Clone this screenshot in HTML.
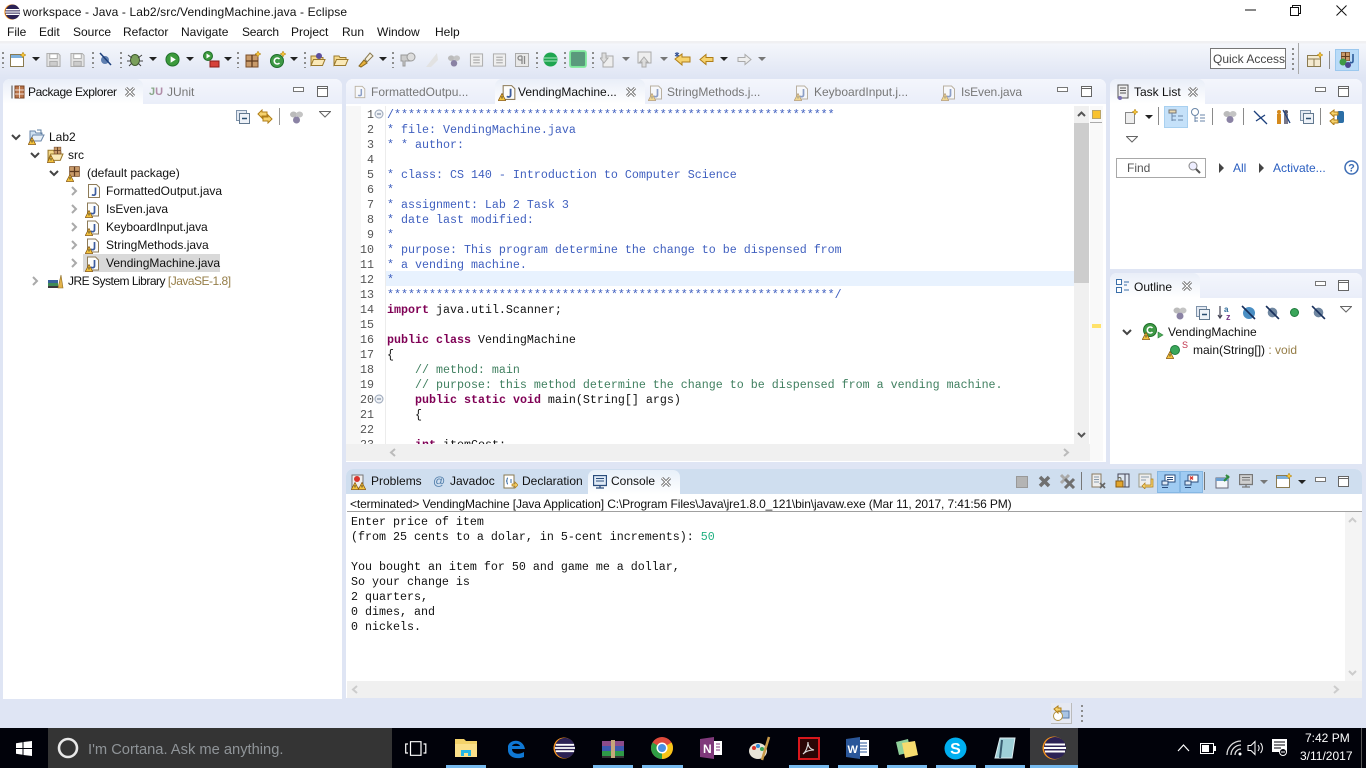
<!DOCTYPE html>
<html><head><meta charset="utf-8"><style>
html,body{margin:0;padding:0}
body{position:relative;width:1366px;height:768px;overflow:hidden;background:#dfe5f4;font-family:"Liberation Sans",sans-serif;font-size:12px;color:#111}
div,svg,span.a{position:absolute}
.t{position:absolute;white-space:nowrap;line-height:16px;height:16px;font-size:12px}
.g{color:#777}
.m{font-size:12px;color:#111}
.c{font-family:"Liberation Mono",monospace;font-size:11.67px;line-height:15px;white-space:pre;position:absolute;margin-top:2px}
.cb{color:#3f5fbf}.cg{color:#3f7f5f}.k{color:#7f0055;font-weight:bold}
.n{position:absolute;width:24px;text-align:right;left:350px;font-family:"Liberation Mono",monospace;font-size:11.67px;line-height:15px;color:#555;margin-top:2px}
.panel{background:#fff;border-radius:7px 7px 0 0}
.tabbar{background:linear-gradient(#f4f6fc,#eaeef9);border-radius:7px 7px 0 0}
.tab{background:linear-gradient(#e9eef8,#fff);border-radius:7px 7px 0 0}
.sep{width:1px;background:#8a8a8a}
.grip{width:2px;background:repeating-linear-gradient(#8c8c8c 0 2px,transparent 2px 5px)}
.ul{height:3px;top:765px;background:#76b9ed}
</style></head><body>
<svg width="0" height="0" style="position:absolute">
<defs>
<symbol id="jf" viewBox="0 0 16 16"><path d="M2.5 1.500h8l3 3v10h-11z" fill="#fdfdfb" stroke="#8d7b58"/><path d="M9.500 4.500v6c0 2-2.500 2-3.500 1" fill="none" stroke="#3c5c9e" stroke-width="1.700"/></symbol>
<symbol id="w" viewBox="0 0 8 8"><path d="M4 .5L7.700 7.500H.3z" fill="#f6c53c" stroke="#8a5a10" stroke-width=".8"/><path d="M4 3v2.500" stroke="#333" stroke-width=".9"/></symbol>
<symbol id="cl" viewBox="0 0 12 12"><path d="M2 2l8 8M10 2l-8 8" stroke="#666" stroke-width="3"/><path d="M2 2l8 8M10 2l-8 8" stroke="#fff" stroke-width="1.200"/></symbol>
<symbol id="min" viewBox="0 0 11 6"><rect x=".5" y=".5" width="10" height="4" fill="#fff" stroke="#777"/></symbol>
<symbol id="max" viewBox="0 0 11 11"><rect x=".5" y=".5" width="10" height="10" fill="#fff" stroke="#666"/><path d="M0 2.500h11" stroke="#666"/></symbol>
<symbol id="dn" viewBox="0 0 8 4"><path d="M0 0h8L4 4z" fill="#222"/></symbol>
<symbol id="dg" viewBox="0 0 8 4"><path d="M0 0h8L4 4z" fill="#777"/></symbol>
<symbol id="cv" viewBox="0 0 10 10"><path d="M1 3l4 4 4-4" fill="none" stroke="#444" stroke-width="2"/></symbol>
<symbol id="cr" viewBox="0 0 10 10"><path d="M3 1l4 4-4 4" fill="none" stroke="#aaa" stroke-width="2"/></symbol>
<symbol id="vm" viewBox="0 0 12 7"><path d="M.5.500h11L6 6z" fill="#fff" stroke="#666"/></symbol>
<symbol id="ec" viewBox="0 0 24 24"><circle cx="12" cy="12" r="11.500" fill="#f7941e"/><circle cx="13" cy="12" r="11" fill="#2c2255"/><path d="M3 8.500h20M2 12h22M3 15.500h20" stroke="#fff" stroke-width="2"/></symbol>
<symbol id="pkg" viewBox="0 0 16 16"><rect x="2" y="2" width="12" height="12" fill="#c89a6a" stroke="#7a4e2a"/><path d="M8 2v12M2 8h12" stroke="#5e3a1e" stroke-width="1.500"/></symbol>
<symbol id="fd" viewBox="0 0 16 16"><path d="M1 13V4h5l1 1.500h6V8H4z" fill="#f5d98b" stroke="#9b7a2e"/><path d="M1 13.500L3.500 7.500H15L12.500 13.500z" fill="#fae9b8" stroke="#9b7a2e"/></symbol>
<symbol id="sv" viewBox="0 0 16 16"><path d="M1 1h12l2 2v12H1z" fill="#e4e4e4" stroke="#aaa"/><rect x="4" y="1.500" width="8" height="5" fill="#fff" stroke="#aaa"/><rect x="4" y="9.500" width="8" height="5" fill="#ccc" stroke="#aaa"/></symbol>
<symbol id="pg" viewBox="0 0 16 16"><rect x="1.500" y="1.500" width="13" height="13" fill="#eee" stroke="#aaa"/><path d="M4.500 5h7M4.500 8h7M4.500 11h7" stroke="#999"/></symbol>
<symbol id="gc" viewBox="0 0 16 16"><circle cx="8" cy="8" r="7" fill="#3c9a3c" stroke="#1f6e2a"/><path d="M6 4.500v7l5.500-3.500z" fill="#fff"/></symbol>
<symbol id="gr" viewBox="0 0 14 14"><ellipse cx="4" cy="4.500" rx="3.500" ry="3" fill="#bbb"/><ellipse cx="10" cy="4.500" rx="3.500" ry="3" fill="#c4c4c4"/><circle cx="7" cy="10" r="3.500" fill="#8a82a4"/></symbol>
<symbol id="col" viewBox="0 0 14 14"><rect x=".5" y=".5" width="10" height="10" fill="#e3e9f2" stroke="#7f93aa"/><rect x="3.500" y="3.500" width="10" height="10" fill="#eef2f8" stroke="#61788f"/><path d="M6 8.500h5" stroke="#294d6f" stroke-width="1.500"/></symbol>
<symbol id="no" viewBox="0 0 14 14"><circle cx="7" cy="7" r="4.500" fill="#6f86a0"/><path d="M1 1l12 12" stroke="#18305c" stroke-width="1.600"/></symbol>
</defs></svg>

<!-- title bar -->
<div style="left:0;top:0;width:1366px;height:42px;background:#fff"></div>
<svg style="left:4px;top:4px" width="16" height="16"><use href="#ec"/></svg>
<div class="t" style="left:23px;top:4px;letter-spacing:.13px;color:#111">workspace - Java - Lab2/src/VendingMachine.java - Eclipse</div>
<svg style="left:1245px;top:9px" width="11" height="2"><path d="M0 1h11" stroke="#111"/></svg>
<svg style="left:1290px;top:5px" width="11" height="11"><path d="M.5 2.500h8v8h-8zM2.500 2.500v-2h8v8h-2" fill="none" stroke="#111"/></svg>
<svg style="left:1336px;top:5px" width="11" height="11"><path d="M.5.500l10 10M10.500.500l-10 10" stroke="#111" stroke-width="1"/></svg>
<div class="t m" style="left:7px;top:24px">File</div>
<div class="t m" style="left:39px;top:24px">Edit</div>
<div class="t m" style="left:73px;top:24px">Source</div>
<div class="t m" style="left:123px;top:24px">Refactor</div>
<div class="t m" style="left:181px;top:24px">Navigate</div>
<div class="t m" style="left:242px;top:24px;letter-spacing:-.2px">Search</div>
<div class="t m" style="left:291px;top:24px">Project</div>
<div class="t m" style="left:342px;top:24px">Run</div>
<div class="t m" style="left:377px;top:24px">Window</div>
<div class="t m" style="left:435px;top:24px">Help</div>

<!-- toolbar -->
<div style="left:0;top:41px;width:1366px;height:37px;background:linear-gradient(#f0f0f2 0,#f0f0f2 2px,#f4f6fb 3px,#dfe5f4 100%)"></div>
<div class="grip" style="left:2px;top:52px;height:16px"></div>
<svg style="left:10px;top:52px" width="16" height="16"><rect x=".5" y="2.500" width="13" height="12" fill="#fff" stroke="#8a7a50"/><rect x="1" y="3" width="12" height="3" fill="#7fb0dc"/><path d="M13 0l1 2 2 1-2 1-1 2-1-2-2-1 2-1z" fill="#f5c33b" stroke="#a97d10" stroke-width=".5"/></svg>
<svg style="left:32px;top:57px" width="8" height="4"><use href="#dn"/></svg>
<svg style="left:46px;top:52px" width="15" height="16"><use href="#sv"/></svg>
<svg style="left:70px;top:52px" width="15" height="16"><use href="#sv"/></svg>
<div class="grip" style="left:92px;top:52px;height:16px"></div>
<svg style="left:98px;top:52px" width="14" height="14"><circle cx="7" cy="8" r="4" fill="#5f7fb0"/><path d="M2 1l11 12" stroke="#1c3f7c" stroke-width="1.500"/></svg>
<div class="grip" style="left:120px;top:52px;height:16px"></div>
<svg style="left:127px;top:51px" width="16" height="17"><ellipse cx="8" cy="9" rx="4.500" ry="5.500" fill="#7ba05c" stroke="#3e5c2b"/><path d="M1 4l4 3M15 4l-4 3M0 10h4M12 10h4M2 15l3-3M14 15l-3-3" stroke="#444"/></svg>
<svg style="left:149px;top:57px" width="8" height="4"><use href="#dn"/></svg>
<svg style="left:165px;top:52px" width="15" height="15"><use href="#gc"/></svg>
<svg style="left:186px;top:57px" width="8" height="4"><use href="#dn"/></svg>
<svg style="left:202px;top:51px" width="18" height="17"><circle cx="6" cy="5" r="4.500" fill="#3c9a3c" stroke="#1f6e2a"/><path d="M4.500 2.500v5l4-2.500z" fill="#fff"/><rect x="8" y="10" width="9" height="6" fill="#d6423a" stroke="#8c1c18"/></svg>
<svg style="left:224px;top:57px" width="8" height="4"><use href="#dn"/></svg>
<div class="grip" style="left:237px;top:52px;height:16px"></div>
<svg style="left:245px;top:51px" width="17" height="17"><rect x="1" y="4" width="12" height="12" fill="#c89a6a" stroke="#7a4e2a"/><path d="M7 4v12M1 10h12" stroke="#5e3a1e" stroke-width="1.300"/><path d="M13 0l1 2 2 1-2 1-1 2-1-2-2-1 2-1z" fill="#f5c33b" stroke="#a97d10" stroke-width=".5"/></svg>
<svg style="left:270px;top:51px" width="16" height="17"><circle cx="7" cy="10" r="6.500" fill="#3f9a46" stroke="#1f6e2a"/><path d="M9.500 8a3 3 0 1 0 0 4" fill="none" stroke="#fff" stroke-width="1.600"/><path d="M13 0l1 2 2 1-2 1-1 2-1-2-2-1 2-1z" fill="#f5c33b" stroke="#a97d10" stroke-width=".5"/></svg>
<svg style="left:290px;top:57px" width="8" height="4"><use href="#dn"/></svg>
<div class="grip" style="left:304px;top:52px;height:16px"></div>
<svg style="left:310px;top:52px" width="16" height="16"><use href="#fd"/><circle cx="9" cy="4" r="3" fill="#5c4e9c"/></svg>
<svg style="left:333px;top:52px" width="16" height="16"><use href="#fd"/></svg>
<svg style="left:357px;top:51px" width="17" height="17"><path d="M2 15l5-6 3 3-6 4z" fill="#e7b13c" stroke="#8a6a20"/><path d="M8 8l5-6 3 3-6 6z" fill="#f5f0e0" stroke="#8a7a50"/></svg>
<svg style="left:379px;top:57px" width="8" height="4"><use href="#dn"/></svg>
<div class="grip" style="left:392px;top:52px;height:16px"></div>
<svg style="left:400px;top:52px" width="16" height="16"><path d="M1 3h9v6H5v5H3V9H1z" fill="#ccc" stroke="#999"/><circle cx="11" cy="5" r="4" fill="#ddd" stroke="#999"/></svg>
<svg style="left:424px;top:52px" width="15" height="16"><path d="M2 15L13 1l1 7-7 7z" fill="#e2e2e2"/></svg>
<svg style="left:447px;top:54px" width="14" height="13"><use href="#gr"/></svg>
<svg style="left:469px;top:52px" width="15" height="16"><use href="#pg"/></svg>
<svg style="left:492px;top:52px" width="15" height="16"><use href="#pg"/></svg>
<svg style="left:515px;top:52px" width="15" height="16"><rect x=".5" y="1.500" width="13" height="13" fill="#e8e8e8" stroke="#aaa"/><path d="M7 4H5a2 2 0 0 0 0 4h2M7 4v8M9.500 4v8" stroke="#888" fill="none" stroke-width="1.300"/></svg>
<div class="grip" style="left:536px;top:52px;height:16px"></div>
<svg style="left:543px;top:52px" width="15" height="15"><circle cx="7.500" cy="7.500" r="7" fill="#1fa550"/><path d="M1 6h13M1 9h13" stroke="#a8e8c0"/></svg>
<div class="grip" style="left:564px;top:52px;height:16px"></div>
<div style="left:570px;top:51px;width:14px;height:14px;background:#5a9a7c;border:1px solid #7be89a;border-radius:2px;box-shadow:0 0 0 1px #8fe8a8"></div>
<div class="grip" style="left:592px;top:52px;height:16px"></div>
<svg style="left:600px;top:52px" width="14" height="16"><rect x="3" y="4" width="10" height="11" fill="#eee" stroke="#aaa"/><path d="M2 1h4v5h2l-4 5-4-5h2z" fill="#ddd" stroke="#aaa"/></svg>
<svg style="left:622px;top:57px" width="8" height="4"><use href="#dg"/></svg>
<svg style="left:637px;top:51px" width="15" height="17"><rect x="1" y="1" width="13" height="11" fill="#eee" stroke="#aaa"/><path d="M7 6l4 5H9v5H5v-5H3z" fill="#ddd" stroke="#aaa"/></svg>
<svg style="left:660px;top:57px" width="8" height="4"><use href="#dg"/></svg>
<svg style="left:674px;top:52px" width="17" height="14"><path d="M1 7l7-5v3h8v5H8v3z" fill="#f6d36e" stroke="#b07e18"/><path d="M3 0v5M1 1l4 3M5 1L1 4" stroke="#2a4a90"/></svg>
<svg style="left:699px;top:53px" width="15" height="13"><path d="M1 6.500l6-5v3h7v4H7v3z" fill="#f6d36e" stroke="#b07e18"/></svg>
<svg style="left:720px;top:57px" width="8" height="4"><use href="#dn"/></svg>
<svg style="left:737px;top:53px" width="15" height="13"><path d="M14 6.500l-6-5v3H1v4h7v3z" fill="#eee" stroke="#aaa"/></svg>
<svg style="left:758px;top:57px" width="8" height="4"><use href="#dg"/></svg>

<div style="left:1210px;top:48px;width:74px;height:19px;background:#fff;border:1px solid #777"></div>
<div class="t" style="left:1213px;top:51px;color:#444">Quick Access</div>
<div class="grip" style="left:1292px;top:48px;height:22px"></div>
<div class="sep" style="left:1298px;top:43px;height:31px;background:#a9a9a9"></div>
<svg style="left:1307px;top:52px" width="16" height="16"><rect x=".5" y="3.500" width="13" height="11" fill="#f4ead0" stroke="#8a7a50"/><path d="M.5 7h13M7 7v7" stroke="#8a7a50"/><path d="M13 0l1 2 2 1-2 1-1 2-1-2-2-1 2-1z" fill="#f5c33b" stroke="#a97d10" stroke-width=".5"/></svg>
<div class="sep" style="left:1329px;top:51px;height:18px"></div>
<div style="left:1335px;top:49px;width:22px;height:20px;background:#b9dbf8;border:1px solid #9cc8ee"></div>
<svg style="left:1339px;top:51px" width="17" height="17"><use href="#pkg" width="11" height="11" x="1"/><circle cx="4" cy="11" r="3.500" fill="#3f9a46"/><circle cx="9" cy="14" r="3" fill="#4c4690"/><path d="M14 3v7c0 2-2 2-3 1" fill="none" stroke="#2c5a9a" stroke-width="1.600"/></svg>

<!-- Package Explorer -->
<div class="panel" style="left:3px;top:79px;width:339px;height:620px"></div>
<div class="tabbar" style="left:3px;top:79px;width:339px;height:25px"></div>
<div class="tab" style="left:3px;top:79px;width:140px;height:25px"></div>
<svg style="left:11px;top:85px" width="14" height="14"><path d="M1 .5v13" stroke="#444"/><rect x="4" y="1" width="9" height="12" fill="#b9744a" stroke="#7a4526"/><path d="M4 5h9M4 9h9M8.500 1v12" stroke="#fff" stroke-width=".7"/></svg>
<div class="t" style="left:28px;top:84px;letter-spacing:-.38px">Package Explorer</div>
<svg style="left:124px;top:86px" width="12" height="12"><use href="#cl"/></svg>
<div class="t" style="left:149px;top:84px;color:#8aa88a;font-weight:bold;font-size:11px">J<span style="color:#b08ca8">U</span></div>
<div class="t g" style="left:167px;top:84px">JUnit</div>
<svg style="left:293px;top:87px" width="11" height="6"><use href="#min"/></svg>
<svg style="left:317px;top:86px" width="11" height="11"><use href="#max"/></svg>
<svg style="left:236px;top:110px" width="14" height="14"><use href="#col"/></svg>
<svg style="left:257px;top:109px" width="16" height="15"><path d="M1 5l4-4v2h5v4H5v2z" fill="#f6d36e" stroke="#b07e18"/><path d="M15 10l-4-4v2H6v4h5v2z" fill="#f6d36e" stroke="#b07e18"/></svg>
<div class="sep" style="left:279px;top:108px;height:17px;background:#999"></div>
<svg style="left:289px;top:110px" width="15" height="14"><use href="#gr"/></svg>
<svg style="left:319px;top:111px" width="12" height="7"><use href="#vm"/></svg>

<!-- tree -->
<svg style="left:11px;top:132px" width="10" height="10"><use href="#cv"/></svg>
<svg style="left:28px;top:128px" width="17" height="17"><path d="M2 12V3h5l1 2h6v3H5z" fill="#cfe0f0" stroke="#6a86a8"/><path d="M2 13l3-6h11l-3 6z" fill="#e8f0f8" stroke="#6a86a8"/><path d="M9 2l4 0 0 4" fill="none" stroke="#5a7ca0"/><use href="#w" x="0" y="9" width="8" height="8"/></svg>
<div class="t" style="left:49px;top:129px">Lab2</div>
<svg style="left:30px;top:150px" width="10" height="10"><use href="#cv"/></svg>
<svg style="left:47px;top:146px" width="17" height="17"><use href="#fd"/><use href="#pkg" x="6" y="0" width="9" height="9"/><use href="#w" x="0" y="9" width="8" height="8"/></svg>
<div class="t" style="left:68px;top:147px">src</div>
<svg style="left:49px;top:168px" width="10" height="10"><use href="#cv"/></svg>
<svg style="left:66px;top:165px" width="15" height="17"><use href="#pkg" x="2" y="0" width="13" height="13"/><use href="#w" x="0" y="9" width="8" height="8"/></svg>
<div class="t" style="left:87px;top:165px">(default package)</div>

<div style="left:83px;top:254px;width:137px;height:18px;background:#d9d9d9"></div>
<svg style="left:69px;top:186px" width="10" height="10"><use href="#cr"/></svg>
<svg style="left:69px;top:204px" width="10" height="10"><use href="#cr"/></svg>
<svg style="left:69px;top:222px" width="10" height="10"><use href="#cr"/></svg>
<svg style="left:69px;top:240px" width="10" height="10"><use href="#cr"/></svg>
<svg style="left:69px;top:258px" width="10" height="10"><use href="#cr"/></svg>
<svg style="left:86px;top:183px" width="16" height="16"><use href="#jf"/></svg>
<svg style="left:85px;top:201px" width="16" height="17"><use href="#jf"/><use href="#w" x="0" y="9" width="8" height="8"/></svg>
<svg style="left:85px;top:219px" width="16" height="17"><use href="#jf"/><use href="#w" x="0" y="9" width="8" height="8"/></svg>
<svg style="left:85px;top:237px" width="16" height="17"><use href="#jf"/><use href="#w" x="0" y="9" width="8" height="8"/></svg>
<svg style="left:85px;top:255px" width="16" height="17"><use href="#jf"/><use href="#w" x="0" y="9" width="8" height="8"/></svg>
<div class="t" style="left:106px;top:183px">FormattedOutput.java</div>
<div class="t" style="left:106px;top:201px">IsEven.java</div>
<div class="t" style="left:106px;top:219px;letter-spacing:-.1px">KeyboardInput.java</div>
<div class="t" style="left:106px;top:237px">StringMethods.java</div>
<div class="t" style="left:106px;top:255px">VendingMachine.java</div>
<svg style="left:30px;top:276px" width="10" height="10"><use href="#cr"/></svg>
<svg style="left:48px;top:274px" width="16" height="15"><rect x="0" y="9" width="10" height="3" fill="#3f8a55"/><rect x="0" y="6" width="10" height="3" fill="#38629c"/><rect x="0" y="12" width="10" height="2" fill="#3a3a3a"/><path d="M10 14L13 1l2 13z" fill="#e2b24a" stroke="#8c6a20" stroke-width=".6"/></svg>
<div class="t" style="left:68px;top:273px;letter-spacing:-.5px">JRE System Library <span style="color:#957d47">[JavaSE-1.8]</span></div>

<!-- Editor -->
<div class="panel" style="left:346px;top:79px;width:760px;height:383px"></div>
<div class="tabbar" style="left:346px;top:79px;width:760px;height:25px"></div>
<div class="tab" style="left:495px;top:79px;width:150px;height:25px"></div>
<svg style="left:353px;top:84px" width="14" height="16" opacity=".55"><use href="#jf" width="14" height="16"/></svg>
<div class="t g" style="left:371px;top:84px">FormattedOutpu...</div>
<svg style="left:498px;top:84px" width="18" height="17"><use href="#jf" x="2"/><use href="#w" x="0" y="9" width="8" height="8"/></svg>
<div class="t" style="left:518px;top:84px">VendingMachine...</div>
<svg style="left:625px;top:86px" width="12" height="12"><use href="#cl"/></svg>
<svg style="left:648px;top:84px" width="16" height="17" opacity=".55"><use href="#jf"/><use href="#w" x="0" y="9" width="8" height="8"/></svg>
<div class="t g" style="left:667px;top:84px">StringMethods.j...</div>
<svg style="left:794px;top:84px" width="16" height="17" opacity=".55"><use href="#jf"/><use href="#w" x="0" y="9" width="8" height="8"/></svg>
<div class="t g" style="left:814px;top:84px">KeyboardInput.j...</div>
<svg style="left:941px;top:84px" width="16" height="17" opacity=".55"><use href="#jf"/><use href="#w" x="0" y="9" width="8" height="8"/></svg>
<div class="t g" style="left:961px;top:84px;letter-spacing:-.1px">IsEven.java</div>
<svg style="left:1057px;top:87px" width="11" height="6"><use href="#min"/></svg>
<svg style="left:1081px;top:86px" width="11" height="11"><use href="#max"/></svg>

<div style="left:346px;top:106px;width:15px;height:338px;background:#f7f7f7"></div>
<div style="left:385px;top:106px;width:1px;height:338px;background:#ececec"></div>
<div style="left:386px;top:271px;width:688px;height:15px;background:#e8f2fe"></div>
<div style="left:346px;top:106px;width:728px;height:338px;overflow:hidden">
<div style="position:absolute;left:-346px;top:-106px;width:1100px;height:600px">
<div class="n" style="top:106px">1</div><div class="n" style="top:121px">2</div><div class="n" style="top:136px">3</div><div class="n" style="top:151px">4</div><div class="n" style="top:166px">5</div><div class="n" style="top:181px">6</div><div class="n" style="top:196px">7</div><div class="n" style="top:211px">8</div><div class="n" style="top:226px">9</div><div class="n" style="top:241px">10</div><div class="n" style="top:256px">11</div><div class="n" style="top:271px">12</div><div class="n" style="top:286px">13</div><div class="n" style="top:301px">14</div><div class="n" style="top:316px">15</div><div class="n" style="top:331px">16</div><div class="n" style="top:346px">17</div><div class="n" style="top:361px">18</div><div class="n" style="top:376px">19</div><div class="n" style="top:391px">20</div><div class="n" style="top:406px">21</div><div class="n" style="top:421px">22</div><div class="n" style="top:436px">23</div>
<div class="c cb" style="left:387px;top:106px">/***************************************************************</div>
<div class="c cb" style="left:387px;top:121px">* file: VendingMachine.java</div>
<div class="c cb" style="left:387px;top:136px">* * author:</div>
<div class="c cb" style="left:387px;top:166px">* class: CS 140 - Introduction to Computer Science</div>
<div class="c cb" style="left:387px;top:181px">*</div>
<div class="c cb" style="left:387px;top:196px">* assignment: Lab 2 Task 3</div>
<div class="c cb" style="left:387px;top:211px">* date last modified:</div>
<div class="c cb" style="left:387px;top:226px">*</div>
<div class="c cb" style="left:387px;top:241px">* purpose: This program determine the change to be dispensed from</div>
<div class="c cb" style="left:387px;top:256px">* a vending machine.</div>
<div class="c cb" style="left:387px;top:271px">*</div>
<div class="c cb" style="left:387px;top:286px">****************************************************************/</div>
<div class="c" style="left:387px;top:301px"><span class="k">import</span> java.util.Scanner;</div>
<div class="c" style="left:387px;top:331px"><span class="k">public</span> <span class="k">class</span> VendingMachine</div>
<div class="c" style="left:387px;top:346px">{</div>
<div class="c cg" style="left:387px;top:361px">    // method: main</div>
<div class="c cg" style="left:387px;top:376px">    // purpose: this method determine the change to be dispensed from a vending machine.</div>
<div class="c" style="left:387px;top:391px">    <span class="k">public</span> <span class="k">static</span> <span class="k">void</span> main(String[] args)</div>
<div class="c" style="left:387px;top:406px">    {</div>
<div class="c" style="left:387px;top:436px">    <span class="k">int</span> itemCost;</div>
</div></div>
<svg style="left:374px;top:109px" width="10" height="10"><circle cx="5" cy="5" r="4" fill="#eef1f6" stroke="#9aa6b8"/><path d="M3 5h4" stroke="#66768c"/></svg>
<svg style="left:374px;top:394px" width="10" height="10"><circle cx="5" cy="5" r="4" fill="#eef1f6" stroke="#9aa6b8"/><path d="M3 5h4" stroke="#66768c"/></svg>
<div style="left:1074px;top:106px;width:15px;height:338px;background:#f0f0f0"></div>
<div style="left:1074px;top:123px;width:15px;height:160px;background:#cdcdcd"></div>
<svg style="left:1077px;top:110px" width="9" height="8"><path d="M1 6l3.500-3.500L8 6" fill="none" stroke="#555" stroke-width="2"/></svg>
<svg style="left:1077px;top:431px" width="9" height="8"><path d="M1 2l3.500 3.500L8 2" fill="none" stroke="#555" stroke-width="2"/></svg>
<div style="left:1090px;top:106px;width:13px;height:355px;background:#f9f9f9"></div>
<div style="left:1092px;top:110px;width:7px;height:7px;background:#f9c22e;border:1px solid #b9a468"></div>
<div style="left:1090px;top:122px;width:12px;height:1px;background:#aaa"></div>
<div style="left:1092px;top:324px;width:9px;height:4px;background:#ffe26a"></div>
<div style="left:346px;top:444px;width:744px;height:17px;background:#f0f0f0"></div>
<svg style="left:389px;top:448px" width="8" height="9"><path d="M6 1L2 4.500 6 8" fill="none" stroke="#bbb" stroke-width="2"/></svg>
<svg style="left:1062px;top:448px" width="8" height="9"><path d="M2 1l4 3.500L2 8" fill="none" stroke="#bbb" stroke-width="2"/></svg>

<!-- Task list -->
<div class="panel" style="left:1110px;top:79px;width:252px;height:190px"></div>
<div class="tabbar" style="left:1110px;top:79px;width:252px;height:25px"></div>
<div class="tab" style="left:1110px;top:79px;width:95px;height:25px"></div>
<svg style="left:1117px;top:84px" width="13" height="16"><rect x="1" y="1" width="10" height="13" fill="#eee" stroke="#555"/><path d="M3 4h6M3 6.500h6M3 9h6" stroke="#555"/><circle cx="3" cy="14" r="2" fill="#7a70b0"/></svg>
<div class="t" style="left:1134px;top:84px">Task List</div>
<svg style="left:1187px;top:86px" width="12" height="12"><use href="#cl"/></svg>
<svg style="left:1315px;top:87px" width="11" height="6"><use href="#min"/></svg>
<svg style="left:1338px;top:86px" width="11" height="11"><use href="#max"/></svg>
<svg style="left:1124px;top:108px" width="15" height="16"><path d="M1.500 4.500h9v11h-9z" fill="#eee" stroke="#888"/><path d="M11 1l1 2 2 1-2 1-1 2-1-2-2-1 2-1z" fill="#f5c33b" stroke="#a97d10" stroke-width=".5"/></svg>
<svg style="left:1145px;top:115px" width="8" height="4"><use href="#dn"/></svg>
<div class="sep" style="left:1158px;top:107px;height:18px"></div>
<div style="left:1164px;top:106px;width:22px;height:20px;background:#c5e1f9;border:1px solid #a8d0f0"></div>
<svg style="left:1168px;top:108px" width="16" height="16"><path d="M1 2h7v3H1z" fill="#e8d8b0" stroke="#777"/><path d="M4 5v8M4 8h4M4 12h4M10 8h5M10 12h5" stroke="#6a86a8"/></svg>
<svg style="left:1191px;top:108px" width="15" height="16"><circle cx="4" cy="4" r="3.500" fill="#fff" stroke="#6a86a8"/><path d="M4 8v6M4 10h3M4 13h3M9 7h5M9 10h5M9 13h5" stroke="#6a86a8"/></svg>
<div class="sep" style="left:1212px;top:108px;height:17px"></div>
<svg style="left:1223px;top:109px" width="14" height="15"><use href="#gr"/></svg>
<div class="sep" style="left:1243px;top:108px;height:17px"></div>
<svg style="left:1253px;top:110px" width="15" height="15"><path d="M1 1l13 13M3 11l9-6" stroke="#1c3f7c" stroke-width="1.300"/></svg>
<svg style="left:1275px;top:109px" width="16" height="16"><circle cx="4" cy="3" r="2" fill="#d58a1c"/><rect x="2" y="5" width="4" height="10" fill="#d58a1c"/><circle cx="11" cy="3" r="2" fill="#556"/><rect x="9" y="5" width="4" height="10" fill="#778"/><path d="M8 1l7 13" stroke="#1c3f7c" stroke-width="1.300"/></svg>
<svg style="left:1300px;top:110px" width="14" height="14"><use href="#col"/></svg>
<div class="sep" style="left:1320px;top:108px;height:17px"></div>
<svg style="left:1329px;top:109px" width="16" height="16"><rect x="8" y="2" width="7" height="12" rx="2" fill="#2b6ea6"/><path d="M1 4l4-3v2h4v3H5v2zM1 12l4-3v2h4v3H5v2z" fill="#f6d36e" stroke="#b07e18"/></svg>
<svg style="left:1126px;top:136px" width="12" height="7"><use href="#vm"/></svg>
<div style="left:1116px;top:158px;width:88px;height:18px;background:#fff;border:1px solid #a8a8a8"></div>
<div class="t" style="left:1127px;top:160px;color:#555">Find</div>
<svg style="left:1188px;top:161px" width="13" height="13"><circle cx="5" cy="5" r="4" fill="#eef" stroke="#888"/><path d="M8 8l4 4" stroke="#555" stroke-width="2"/></svg>
<svg style="left:1219px;top:163px" width="5" height="10"><path d="M0 0l5 5-5 5z" fill="#444"/></svg>
<div class="t" style="left:1233px;top:160px;color:#2a5ec0">All</div>
<svg style="left:1259px;top:163px" width="5" height="10"><path d="M0 0l5 5-5 5z" fill="#444"/></svg>
<div class="t" style="left:1273px;top:160px;color:#2a5ec0">Activate...</div>
<svg style="left:1344px;top:160px" width="15" height="15"><circle cx="7.500" cy="7.500" r="6.500" fill="#fff" stroke="#3d6db5" stroke-width="1.500"/><text x="7.500" y="11.500" font-family="Liberation Sans" font-size="11" font-weight="bold" text-anchor="middle" fill="#3d6db5">?</text></svg>

<!-- Outline -->
<div class="panel" style="left:1110px;top:273px;width:252px;height:191px"></div>
<div class="tabbar" style="left:1110px;top:273px;width:252px;height:25px"></div>
<div class="tab" style="left:1110px;top:273px;width:90px;height:25px"></div>
<svg style="left:1116px;top:279px" width="14" height="14"><path d="M.5.500h5v5h-5zM.5 8.500h5v5h-5z" fill="#fff" stroke="#3a6ea8"/><path d="M8 3h5M8 6h3M8 11h5" stroke="#3a6ea8"/></svg>
<div class="t" style="left:1134px;top:279px">Outline</div>
<svg style="left:1181px;top:280px" width="12" height="12"><use href="#cl"/></svg>
<svg style="left:1315px;top:281px" width="11" height="6"><use href="#min"/></svg>
<svg style="left:1338px;top:280px" width="11" height="11"><use href="#max"/></svg>
<svg style="left:1173px;top:306px" width="14" height="14"><use href="#gr"/></svg>
<svg style="left:1196px;top:306px" width="14" height="14"><use href="#col"/></svg>
<svg style="left:1217px;top:304px" width="17" height="17"><path d="M3 2v12M1 11l2 3 2-3" fill="none" stroke="#445" stroke-width="1.200"/><text x="7" y="8" font-family="Liberation Sans" font-size="8" font-weight="bold" fill="#2d6a9a">a</text><text x="9" y="16" font-family="Liberation Sans" font-size="9" font-weight="bold" fill="#7a3a8a">z</text></svg>
<svg style="left:1241px;top:305px" width="15" height="15"><circle cx="8" cy="8" r="6" fill="#4a8fc4"/><path d="M1 1l13 13" stroke="#18305c" stroke-width="1.600"/></svg>
<svg style="left:1265px;top:305px" width="15" height="15"><use href="#no"/></svg>
<svg style="left:1290px;top:308px" width="9" height="9"><circle cx="4.500" cy="4.500" r="4" fill="#3aa65a" stroke="#1f7a3c"/></svg>
<svg style="left:1311px;top:305px" width="15" height="15"><use href="#no"/></svg>
<svg style="left:1340px;top:306px" width="12" height="7"><use href="#vm"/></svg>
<svg style="left:1122px;top:327px" width="10" height="10"><use href="#cv"/></svg>
<svg style="left:1142px;top:323px" width="17" height="17"><circle cx="8" cy="7" r="6.500" fill="#3f9a46" stroke="#1f6e2a"/><path d="M10.500 5a3 3 0 1 0 0 4" fill="none" stroke="#fff" stroke-width="1.600"/><use href="#w" x="0" y="9" width="8" height="8"/></svg>
<svg style="left:1157px;top:331px" width="7" height="8"><path d="M1 1l5 3-5 3z" fill="#4fae5a" stroke="#2c7e3a" stroke-width=".6"/></svg>
<div class="t" style="left:1168px;top:324px">VendingMachine</div>
<svg style="left:1166px;top:344px" width="14" height="15"><circle cx="9" cy="6" r="4.500" fill="#3aa65a" stroke="#1f7a3c"/><use href="#w" x="0" y="7" width="8" height="8"/></svg>
<div class="t" style="left:1182px;top:337px;color:#c0304a;font-size:9px">S</div>
<div class="t" style="left:1193px;top:342px">main(String[]) <span style="color:#957d47">: void</span></div>

<!-- Console -->
<div class="panel" style="left:346px;top:469px;width:1016px;height:229px"></div>
<div style="left:346px;top:469px;width:1016px;height:25px;background:#cfdeef;border-radius:7px 7px 0 0"></div>
<div style="left:588px;top:470px;width:92px;height:25px;background:linear-gradient(#e8f0f9,#fff);border-radius:7px 7px 0 0"></div>
<svg style="left:351px;top:474px" width="15" height="16"><rect x="1" y="1" width="11" height="13" fill="#eee" stroke="#777"/><circle cx="6" cy="5" r="3" fill="#d8342c"/><use href="#w" x="0" y="8" width="8" height="8"/><use href="#w" x="7" y="8" width="8" height="8"/></svg>
<div class="t" style="left:371px;top:473px">Problems</div>
<div class="t" style="left:433px;top:473px;color:#4c7aa8">@</div>
<div class="t" style="left:450px;top:473px">Javadoc</div>
<svg style="left:503px;top:474px" width="15" height="16"><rect x="1" y="1" width="10" height="13" fill="#fff" stroke="#8a7a50"/><path d="M5 4c-1 0-1 1-1 2s-1 1-1 1 1 0 1 1 0 2 1 2M7 6h2M7 8h2" fill="none" stroke="#3a6ea8"/><path d="M9 10h3V8l3 3-3 3v-2H9z" fill="#f6d36e" stroke="#b07e18" stroke-width=".7"/></svg>
<div class="t" style="left:522px;top:473px">Declaration</div>
<svg style="left:593px;top:475px" width="14" height="14"><rect x=".5" y=".5" width="13" height="10" fill="#dfeaf6" stroke="#2b4d7c" stroke-width="1.300"/><path d="M3 3.500h8M3 6h8" stroke="#2b4d7c"/><path d="M3 13h8M7 10v3" stroke="#2b4d7c" stroke-width="1.300"/></svg>
<div class="t" style="left:611px;top:473px">Console</div>
<svg style="left:660px;top:476px" width="12" height="12"><use href="#cl"/></svg>

<div style="left:1016px;top:476px;width:10px;height:10px;background:#b4b4b4;border:1px solid #999"></div>
<svg style="left:1038px;top:475px" width="13" height="13"><path d="M2 2l9 9M11 2l-9 9" stroke="#707070" stroke-width="3.500"/></svg>
<svg style="left:1059px;top:473px" width="17" height="16"><path d="M2 2l8 8M10 2l-8 8" stroke="#aaa" stroke-width="3"/><path d="M6 6l9 9M15 6l-9 9" stroke="#707070" stroke-width="3"/></svg>
<div class="sep" style="left:1081px;top:472px;height:18px;background:#777"></div>
<svg style="left:1091px;top:473px" width="15" height="16"><rect x="1" y="1" width="9" height="13" fill="#eee" stroke="#8a7a60"/><path d="M3 4h5M3 6.500h5M3 9h5" stroke="#89a"/><path d="M9 10l5 5M14 10l-5 5" stroke="#666" stroke-width="1.700"/></svg>
<svg style="left:1115px;top:473px" width="15" height="16"><rect x="3" y="1" width="11" height="13" fill="#dde6f2" stroke="#445"/><path d="M10 1v13" stroke="#445"/><rect x="1" y="8" width="7" height="6" fill="#e2a52c" stroke="#8a5a10"/><path d="M3 8V6a1.500 1.500 0 0 1 3 0v2" fill="none" stroke="#665"/></svg>
<svg style="left:1138px;top:473px" width="16" height="16"><rect x="1" y="1" width="12" height="13" fill="#eee" stroke="#998"/><path d="M3 4h8M3 7h5" stroke="#89a"/><path d="M13 6v6H7V10l-3 3 3 3v-2h8V6z" fill="#f6d36e" stroke="#b07e18" stroke-width=".7"/></svg>
<div style="left:1157px;top:471px;width:21px;height:20px;background:#9fcbf2;border:1px solid #86b8e4"></div>
<div style="left:1180px;top:471px;width:21px;height:20px;background:#9fcbf2;border:1px solid #86b8e4"></div>
<svg style="left:1161px;top:474px" width="15" height="15"><rect x="4" y="1" width="10" height="7" fill="#fff" stroke="#2b4d7c"/><path d="M6 3.500h6M6 5.500h6" stroke="#2b4d7c"/><rect x="1" y="7" width="6" height="4" fill="#dfeaf6" stroke="#2b4d7c"/><path d="M1 13.500h6" stroke="#2b4d7c"/></svg>
<svg style="left:1184px;top:474px" width="15" height="15"><rect x="4" y="1" width="10" height="7" fill="#fff" stroke="#2b4d7c"/><path d="M6 2.500l3 3M9 2.500l-3 3" stroke="#d8342c" stroke-width="1.300"/><rect x="1" y="7" width="6" height="4" fill="#dfeaf6" stroke="#2b4d7c"/><path d="M1 13.500h6" stroke="#2b4d7c"/></svg>
<div class="sep" style="left:1204px;top:472px;height:18px;background:#777"></div>
<svg style="left:1215px;top:474px" width="16" height="16"><rect x="1" y="4" width="12" height="10" fill="#f4f6fa" stroke="#667"/><rect x="1" y="4" width="12" height="3" fill="#6a9ed0"/><path d="M9 7l5-5M11 1l3 3" stroke="#2f8a3c" stroke-width="2"/></svg>
<svg style="left:1239px;top:474px" width="14" height="14"><rect x=".5" y=".5" width="13" height="10" fill="#cfcfcf" stroke="#777" stroke-width="1.300"/><path d="M3 3.500h8M3 6h8" stroke="#777"/><path d="M3 13h8M7 10v3" stroke="#777" stroke-width="1.300"/></svg>
<svg style="left:1260px;top:480px" width="8" height="4"><use href="#dg"/></svg>
<svg style="left:1276px;top:473px" width="16" height="16"><rect x=".5" y="2.500" width="13" height="12" fill="#fff" stroke="#8a7a50"/><rect x="1" y="3" width="12" height="3" fill="#7fb0dc"/><path d="M13 0l1 2 2 1-2 1-1 2-1-2-2-1 2-1z" fill="#f5c33b" stroke="#a97d10" stroke-width=".5"/></svg>
<svg style="left:1298px;top:480px" width="8" height="4"><use href="#dn"/></svg>
<svg style="left:1315px;top:477px" width="11" height="6"><use href="#min"/></svg>
<svg style="left:1338px;top:476px" width="11" height="11"><use href="#max"/></svg>

<div class="t" style="left:350px;top:496px;letter-spacing:-.12px">&lt;terminated&gt; VendingMachine [Java Application] C:\Program Files\Java\jre1.8.0_121\bin\javaw.exe (Mar 11, 2017, 7:41:56 PM)</div>
<div style="left:347px;top:511px;width:1015px;height:1px;background:#a0a0a0"></div>
<div class="c" style="left:351px;top:513px">Enter price of item</div>
<div class="c" style="left:351px;top:528px">(from 25 cents to a dolar, in 5-cent increments): <span style="color:#1fb080">50</span></div>
<div class="c" style="left:351px;top:558px">You bought an item for 50 and game me a dollar,</div>
<div class="c" style="left:351px;top:573px">So your change is</div>
<div class="c" style="left:351px;top:588px">2 quarters,</div>
<div class="c" style="left:351px;top:603px">0 dimes, and</div>
<div class="c" style="left:351px;top:618px">0 nickels.</div>
<div style="left:1345px;top:512px;width:17px;height:186px;background:#f4f4f4"></div>
<div style="left:347px;top:681px;width:1015px;height:17px;background:#f0f0f0"></div>
<svg style="left:1348px;top:516px" width="9" height="8"><path d="M1 6l3.500-3.500L8 6" fill="none" stroke="#ccc" stroke-width="2"/></svg>
<svg style="left:1348px;top:669px" width="9" height="8"><path d="M1 2l3.500 3.500L8 2" fill="none" stroke="#ccc" stroke-width="2"/></svg>
<svg style="left:351px;top:685px" width="8" height="9"><path d="M6 1L2 4.500 6 8" fill="none" stroke="#ccc" stroke-width="2"/></svg>
<svg style="left:1332px;top:685px" width="8" height="9"><path d="M2 1l4 3.500L2 8" fill="none" stroke="#ccc" stroke-width="2"/></svg>

<!-- status -->
<div style="left:1051px;top:703px;width:20px;height:20px;background:#e6e9f2;border-right:1px solid #bbb;border-bottom:1px solid #bbb"></div>
<svg style="left:1053px;top:705px" width="17" height="17"><rect x="8" y="6" width="8" height="7" fill="#a9c4e4" stroke="#5a7ca8"/><circle cx="5" cy="11" r="4.500" fill="#fff" stroke="#b09040"/><path d="M1 4l4-3v2h3v3H5v2z" fill="#f6d36e" stroke="#b07e18"/></svg>
<div class="grip" style="left:1081px;top:705px;height:18px"></div>

<!-- taskbar -->
<div style="left:0;top:728px;width:1366px;height:40px;background:#01020a"></div>
<svg style="left:16px;top:741px" width="16" height="15"><path d="M0 2.200L6.500 1.200V7H0zM7.500 1L16 0V7H7.500zM0 8H6.500V13.800L0 12.800zM7.500 8H16V15L7.500 14z" fill="#fff"/></svg>
<div style="left:48px;top:728px;width:344px;height:40px;background:#343434"></div>
<svg style="left:57px;top:737px" width="22" height="22"><circle cx="11" cy="11" r="9" fill="none" stroke="#e8e8e8" stroke-width="2.600"/></svg>
<div class="t" style="left:88px;top:742px;font-size:14.700px;color:#8f9498">I'm Cortana. Ask me anything.</div>
<svg style="left:405px;top:741px" width="22" height="15"><path d="M5.500.700h10.500v13.600H5.500zM3 3H.7v9H3M18.500 3h2.300v9h-2.300" fill="none" stroke="#fff" stroke-width="1.200"/></svg>
<svg style="left:455px;top:738px" width="22" height="20"><path d="M0 1h9l2 2h11v16H0z" fill="#f3d26a"/><path d="M0 6h22v13H0z" fill="#fbe08a"/><path d="M6 18v-6h10v6h-3v-3H9v3z" fill="#26b6e4"/></svg>
<svg style="left:505px;top:737px" width="21" height="22"><path d="M3 9C5 2 18 1 20 12H7c0 5 7 6 12 3v5c-8 3-16 0-16-7 0-1 0-3 0-4z" fill="#0f78d4"/><path d="M7 9c1-3 7-3 8 0z" fill="#01020a"/></svg>
<svg style="left:552px;top:737px" width="24" height="22"><use href="#ec"/></svg>
<svg style="left:601px;top:739px" width="24" height="20"><rect x="1" y="2" width="22" height="5" fill="#8c4b8a"/><rect x="1" y="7" width="22" height="5" fill="#3d58b0"/><rect x="1" y="12" width="22" height="5" fill="#2e9a48"/><rect x="1" y="17" width="22" height="2" fill="#333"/><rect x="10" y="1" width="4" height="18" fill="#c6a77a"/></svg>
<svg style="left:651px;top:737px" width="22" height="22"><circle cx="11" cy="11" r="11" fill="#de4a3c"/><path d="M11 11L1.500 5.500A11 11 0 0 0 11 22z" fill="#2f9e44"/><path d="M11 11L20.500 5.500A11 11 0 0 1 11 22z" fill="#f7c518"/><circle cx="11" cy="11" r="5.500" fill="#fff"/><circle cx="11" cy="11" r="4" fill="#4a90e2"/></svg>
<svg style="left:700px;top:737px" width="22" height="22"><path d="M0 2l14-2v22L0 20z" fill="#80397b"/><rect x="14" y="4" width="8" height="14" fill="#fff"/><path d="M16 7h4M16 10h4M16 13h4" stroke="#80397b"/><text x="3" y="16" font-family="Liberation Sans" font-size="12" font-weight="bold" fill="#fff">N</text></svg>
<svg style="left:748px;top:736px" width="24" height="25"><ellipse cx="10" cy="15" rx="9" ry="8" fill="#e8e4d8"/><circle cx="6" cy="12" r="2" fill="#d8342c"/><circle cx="10" cy="10" r="2" fill="#2c8ad8"/><circle cx="14" cy="13" r="2" fill="#3aa65a"/><path d="M21 1L14 24" stroke="#c99a4a" stroke-width="2.500"/></svg>
<div style="left:798px;top:737px;width:18px;height:19px;background:#2a0606;border:2px solid #d8171c"></div>
<svg style="left:800px;top:739px" width="18" height="19"><path d="M3 15c3-2 5-8 5-12 0 4 2 7 6 8-4 0-8 1-11 4z" fill="none" stroke="#ddd" stroke-width="1.100"/></svg>
<svg style="left:846px;top:737px" width="23" height="22"><rect x="11" y="3" width="12" height="16" fill="#fff"/><path d="M13 6h8M13 9h8M13 12h8M13 15h8" stroke="#2a5699"/><path d="M0 2l14-2v22L0 20z" fill="#2a5699"/><text x="1.500" y="16" font-family="Liberation Sans" font-size="11" font-weight="bold" fill="#fff">W</text></svg>
<svg style="left:895px;top:738px" width="24" height="21"><path d="M1 4l12-3 3 13-12 3z" fill="#8fd09a"/><path d="M7 5l13-2 3 14-13 3z" fill="#f7dc6f"/></svg>
<svg style="left:944px;top:737px" width="23" height="23"><circle cx="11.500" cy="11.500" r="11" fill="#00aff0"/><text x="11.500" y="17" font-family="Liberation Sans" font-size="16" font-weight="bold" fill="#fff" text-anchor="middle">S</text></svg>
<svg style="left:994px;top:737px" width="22" height="23"><path d="M6 1h15l-3 20H1z" fill="#9fd0d8" stroke="#dfeef2"/><path d="M6 21L8 3" stroke="#385c70" stroke-width="2"/></svg>
<div style="left:1030px;top:728px;width:48px;height:40px;background:#3a3a3c"></div>
<svg style="left:1042px;top:736px" width="24" height="24"><use href="#ec"/></svg>
<div class="ul" style="left:446px;width:40px"></div>
<div class="ul" style="left:593px;width:40px"></div>
<div class="ul" style="left:642px;width:41px"></div>
<div class="ul" style="left:789px;width:40px"></div>
<div class="ul" style="left:838px;width:40px"></div>
<div class="ul" style="left:887px;width:40px"></div>
<div class="ul" style="left:936px;width:40px"></div>
<div class="ul" style="left:985px;width:40px"></div>
<div class="ul" style="left:1030px;width:48px"></div>
<svg style="left:1177px;top:743px" width="13" height="9"><path d="M1 8l5.500-6L12 8" fill="none" stroke="#fff" stroke-width="1.200"/></svg>
<svg style="left:1200px;top:743px" width="16" height="11"><rect x=".5" y=".5" width="13" height="10" fill="none" stroke="#fff"/><rect x="2" y="2" width="7" height="7" fill="#fff"/><rect x="14" y="3" width="2" height="5" fill="#fff"/></svg>
<svg style="left:1226px;top:740px" width="18" height="16"><path d="M1 15A14 14 0 0 1 15 1M5 15A10 10 0 0 1 15 5M9 15A6 6 0 0 1 15 9" fill="none" stroke="#ddd" stroke-width="1.300"/><circle cx="14" cy="14" r="1.500" fill="#fff"/></svg>
<svg style="left:1247px;top:740px" width="17" height="16"><path d="M1 5.500h3l4-4v13l-4-4H1z" fill="none" stroke="#fff"/><path d="M11 5c1.500 2 1.500 4 0 6M13.500 3c2.500 3 2.500 7 0 10" fill="none" stroke="#fff"/></svg>
<svg style="left:1272px;top:739px" width="16" height="18"><rect x="0" y="0" width="15" height="13" fill="#fff"/><path d="M2 3h11M2 6h11M2 9h7" stroke="#01020a"/><circle cx="11" cy="13" r="3.500" fill="#01020a" stroke="#fff"/><path d="M9 13h4" stroke="#fff"/></svg>
<div class="t" style="left:1305px;top:730px;color:#fff;width:40px;text-align:center">7:42 PM</div>
<div class="t" style="left:1300px;top:748px;color:#fff;width:50px;text-align:center">3/11/2017</div>
<div style="left:1361px;top:728px;width:1px;height:40px;background:#555"></div>
</body></html>
